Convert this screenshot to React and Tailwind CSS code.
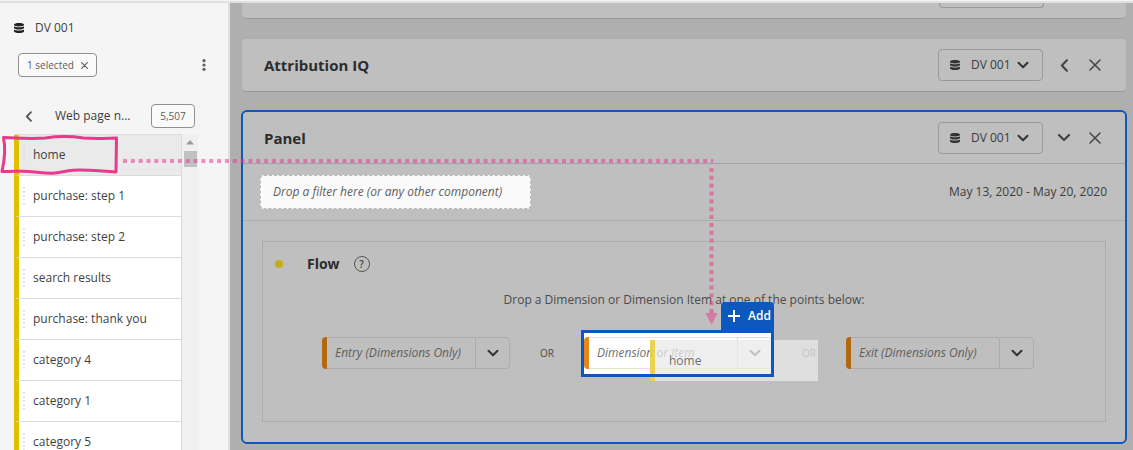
import React from "react";

const items = [
  "home",
  "purchase: step 1",
  "purchase: step 2",
  "search results",
  "purchase: thank you",
  "category 4",
  "category 1",
  "category 5",
];

function DatabaseIcon({ className }) {
  return (
    <svg viewBox="0 0 10 10" className={className} fill="currentColor" aria-hidden="true">
      <path d="M0 1.500C0 .6 2.200 0 5 0s5 .6 5 1.500v.6C10 2.900 7.800 3.400 5 3.400S0 2.900 0 2.100z" />
      <path d="M0 3.300c.9.700 2.800 1 5 1s4.100-.3 5-1v1.800c0 .9-2.200 1.500-5 1.500S0 6 0 5.100z" />
      <path d="M0 6.400c.9.800 2.800 1.100 5 1.100s4.100-.3 5-1.100v2.100C10 9.400 7.800 10 5 10S0 9.400 0 8.500z" />
    </svg>
  );
}

function ChevronDown({ className }) {
  return (
    <svg viewBox="0 0 12 8" className={className} fill="none" stroke="currentColor" strokeWidth="2" strokeLinecap="round" strokeLinejoin="round" aria-hidden="true">
      <path d="M1.500 1.800 6 6.200l4.500-4.400" />
    </svg>
  );
}

function ChevronLeft({ className }) {
  return (
    <svg viewBox="0 0 8 12" className={className} fill="none" stroke="currentColor" strokeWidth="2" strokeLinecap="round" strokeLinejoin="round" aria-hidden="true">
      <path d="M6.200 1.200 1.600 6l4.600 4.800" />
    </svg>
  );
}

function Cross({ className, width = 1.8 }) {
  return (
    <svg viewBox="0 0 12 12" className={className} fill="none" stroke="currentColor" strokeWidth={width} strokeLinecap="round" aria-hidden="true">
      <path d="m1 1 10 10M11 1 1 11" />
    </svg>
  );
}

function Grip({ className }) {
  return (
    <svg viewBox="0 0 3 18" className={className} fill="currentColor" aria-hidden="true">
      {[0, 4, 8, 12, 16].map((y) => (
        <rect key={y} x="0" y={y} width="2" height="1.500" />
      ))}
    </svg>
  );
}

function ViewSelect({ label }) {
  return (
    <label className="flex h-8 w-[105px] items-center rounded border border-[#999] pl-[11px] text-[#333]">
      <DatabaseIcon className="h-[10px] w-[10px] shrink-0" />
      <select aria-label={label} className="ml-[11px] w-11 appearance-none bg-transparent text-xs leading-5 text-[#3c3c3c] outline-none">
        <option>DV 001</option>
      </select>
      <ChevronDown className="ml-[2px] h-2 w-3 shrink-0" />
    </label>
  );
}

function PanelActions({ label, collapsed }) {
  return (
    <div className="flex items-center">
      <ViewSelect label={`${label} data view`} />
      <button type="button" aria-label={`Toggle ${label}`} className="ml-3 flex h-8 w-[18px] items-center justify-center text-[#444]">
        {collapsed ? <ChevronLeft className="h-[13px] w-[9px]" /> : <ChevronDown className="h-[9px] w-[14px]" />}
      </button>
      <button type="button" aria-label={`Close ${label}`} className="ml-3 flex h-8 w-5 items-center justify-center text-[#444]">
        <Cross className="h-3 w-3" width={1.5} />
      </button>
    </div>
  );
}

function DropField({ label, active }) {
  return (
    <div className="flex h-8 w-[188px]">
      <span className={active ? "w-[5px] shrink-0 rounded-l bg-[#e68619]" : "w-[5px] shrink-0 rounded-l bg-[#b36812]"} />
      <input
        type="text"
        aria-label={label}
        placeholder={label}
        className={
          active
            ? "w-0 flex-1 border-y border-[#e1e1e1] bg-white pl-2 text-xs italic leading-5 outline-none placeholder:text-[#707070]"
            : "w-0 flex-1 border-y border-[#acacac] bg-transparent pl-2 text-xs italic leading-5 outline-none placeholder:text-[#5e5e5e]"
        }
      />
      <button
        type="button"
        aria-label={`Choose ${label}`}
        className={
          active
            ? "flex w-[35px] shrink-0 items-center justify-center rounded-r border border-[#d8d8d8] bg-white text-[#4b4b4b]"
            : "flex w-[35px] shrink-0 items-center justify-center rounded-r border border-[#acacac] text-[#333]"
        }
      >
        <ChevronDown className="h-2 w-3" />
      </button>
    </div>
  );
}

function Sidebar() {
  return (
    <aside className="flex w-[230px] shrink-0 flex-col overflow-hidden border-r-2 border-[#e0e0e0] bg-[#f5f5f5]">
      <div className="flex items-center gap-[11px] pl-[14px] pt-[15px] text-[#222]">
        <DatabaseIcon className="h-[10px] w-[10px]" />
        <span className="text-xs leading-5 text-[#3f3f3f]">DV 001</span>
      </div>
      <div className="mt-[15px] flex items-center justify-between pl-[18px] pr-4">
        <button type="button" className="flex h-6 w-[79px] items-center justify-between rounded border border-[#909090] bg-[#fafafa] px-2 text-[10px] leading-4 text-[#5a5a5a]">
          1 selected
          <Cross className="h-[7px] w-[7px]" />
        </button>
        <button type="button" aria-label="More options" className="flex h-6 w-4 items-center justify-center text-[#5f5f5f]">
          <svg viewBox="0 0 4 12" className="h-3 w-1" fill="currentColor" aria-hidden="true">
            <circle cx="2" cy="1.700" r="1.600" />
            <circle cx="2" cy="6" r="1.600" />
            <circle cx="2" cy="10.300" r="1.600" />
          </svg>
        </button>
      </div>
      <div className="mt-[27px] flex items-center pl-[25px] pr-[33px] text-[#5a5a5a]">
        <button type="button" aria-label="Back" className="flex h-6 w-2 items-center">
          <ChevronLeft className="h-[11px] w-2" />
        </button>
        <span className="ml-[22px] flex-1 text-xs leading-5 text-[#3f3f3f]">Web page n...</span>
        <span className="flex h-6 w-11 items-center justify-center rounded border border-[#909090] bg-[#fafafa] text-[10px] leading-4 text-[#5a5a5a]">5,507</span>
      </div>
      <div className="mt-[6px] flex min-h-0 flex-1 pl-[14px]">
        <ul className="w-[168px] border-r border-t border-[#dcdcdc]">
          {items.map((name, i) => (
            <li key={name} className="h-[41px]">
              <button
                type="button"
                className={
                  i === 0
                    ? "flex h-full w-full items-center border-b border-l-[5px] border-b-[#dcdcdc] border-l-[#dfbf00] bg-[#eaeaea] pl-1 text-left text-xs leading-5 text-[#3f3f3f]"
                    : "flex h-full w-full items-center border-b border-l-[5px] border-b-[#dcdcdc] border-l-[#dfbf00] bg-white pl-1 text-left text-xs leading-5 text-[#3f3f3f]"
                }
              >
                <Grip className="h-[18px] w-[3px] text-[#dadada]" />
                <span className="ml-[7px]">{name}</span>
              </button>
            </li>
          ))}
        </ul>
        <div className="flex w-4 flex-col items-center bg-[#f0f0f0] pt-[6px]" aria-hidden="true">
          <svg viewBox="0 0 8 5" className="h-[5px] w-2" fill="#999">
            <path d="M4 0 8 4.500H0z" />
          </svg>
          <span className="mt-[6px] h-4 w-[13px] bg-[#c1c1c1]" />
        </div>
      </div>
    </aside>
  );
}

function DropTarget() {
  return (
    <div className="relative">
      <div className="absolute -bottom-2 -left-[3px] -right-[2px] -top-[7px] bg-white" />
      <div className="relative">
        <DropField label="Dimension or Item" active />
      </div>
      <div className="absolute left-[66px] top-[3px] flex h-[41px] w-[168px] items-center border-l-[5px] border-[#e8cc25]/80 bg-[#e9e9e9]/75 pl-[14px] text-xs leading-5 text-[#707070]">
        home
      </div>
      <div className="pointer-events-none absolute -bottom-2 -left-[3px] -right-[2px] -top-[7px] border-[3px] border-[#0d58bd]" />
      <button type="button" className="absolute -right-[2px] -top-[35px] flex h-7 w-[53px] items-center gap-2 rounded-t bg-[#0d58bd] pl-[7px] text-xs font-semibold leading-5 text-white">
        <svg viewBox="0 0 12 12" className="h-3 w-3 shrink-0" stroke="currentColor" strokeWidth="2" aria-hidden="true">
          <path d="M6 0v12M0 6h12" />
        </svg>
        <span>Add</span>
      </button>
    </div>
  );
}

function DragTrail() {
  return (
    <svg className="pointer-events-none absolute left-0 top-0 h-[450px] w-[800px]" viewBox="0 0 800 450" fill="none" aria-hidden="true">
      <path
        d="M3.500 137.500c14 .6 28 1.500 42 .5 13-2 28-1.500 38 0 12 1 22 .3 33 0l-.5 34c-14-.5-27-2.500-43-1.800-9 .5-12 3-21 3-12 0-18-2-29-2-7 0-13 .6-21 .2 2.500-11 4-22 1.500-33.900z"
        stroke="#e83a8c"
        strokeWidth="3"
        strokeLinejoin="round"
      />
      <path d="M123 161h590" stroke="#e83a8c" strokeOpacity="0.55" strokeWidth="4" strokeDasharray="4 3.840" />
      <path d="M711.500 168v148" stroke="#e83a8c" strokeOpacity="0.550" strokeWidth="4" strokeDasharray="4 3.840" />
      <path d="M705.500 313h12l-6 12z" fill="#d87aa6" />
    </svg>
  );
}

export default function App() {
  return (
    <div className="relative flex h-screen flex-col overflow-hidden bg-[#f5f5f5] font-['Open_Sans','Noto_Sans',sans-serif]">
      <div className="h-[3px] shrink-0 border-b-2 border-[#e0e0e0]" />
      <div className="flex min-h-0 flex-1">
        <Sidebar />
        <main className="min-w-0 flex-1 overflow-hidden bg-[#afafaf] pl-[11px] pr-[6px]">
          <section className="mx-px flex h-4 items-end justify-end rounded-b border-b border-[#999] bg-[#bfbfbf] pb-[10px] pr-[82px]">
            <span className="h-[5px] w-[105px] rounded-b border-x border-b border-[#999]" />
          </section>
          <section className="mx-px mt-5 flex h-[53px] items-center justify-between rounded border-b border-[#999] bg-[#bfbfbf] pl-[22px] pr-[21px]">
            <h2 className="text-[15px] font-bold leading-6 text-[#2c2c2c]">Attribution IQ</h2>
            <PanelActions label="Attribution IQ" collapsed />
          </section>
          <section className="mt-[18px] rounded-md border-2 border-[#0d58bd] bg-[#bfbfbf]">
            <header className="flex h-[52px] items-center justify-between border-b border-[#a2a2a2] pl-[21px] pr-5">
              <h2 className="text-[15px] font-bold leading-6 text-[#2c2c2c]">Panel</h2>
              <PanelActions label="Panel" />
            </header>
            <div className="flex h-[57px] items-center justify-between border-b border-[#acacac] pl-[17px] pr-[18px]">
              <div className="flex h-[34px] w-[271px] items-center whitespace-nowrap rounded border border-dashed border-[#b8b8b8] bg-[#fafafa] pl-3 text-xs italic leading-5 text-[#5e5e5e]">
                Drop a filter here (or any other component)
              </div>
              <span className="text-xs leading-5 text-[#3c3c3c]">May 13, 2020 - May 20, 2020</span>
            </div>
            <div className="mx-[19px] mb-5 mt-5 h-[181px] border border-[#acacac]">
              <div className="flex items-center pl-3 pt-[10px]">
                <span className="h-2 w-2 rounded-full bg-[#c8ab1a]" />
                <h3 className="ml-6 text-sm font-bold leading-6 text-[#2c2c2c]">Flow</h3>
                <button type="button" aria-label="Help" className="ml-[14px] flex h-4 w-4 items-center justify-center rounded-full border border-[#555] text-[10px] font-semibold leading-4 text-[#444]">
                  ?
                </button>
              </div>
              <p className="mt-3 text-center text-xs leading-6 text-[#4b4b4b]">Drop a Dimension or Dimension Item at one of the points below:</p>
              <div className="mt-[25px] flex items-center justify-center pr-3 text-[10px] leading-4 text-[#4b4b4b]">
                <DropField label="Entry (Dimensions Only)" />
                <span className="w-[74px] text-center">OR</span>
                <DropTarget />
                <span className="w-[74px] text-center">OR</span>
                <DropField label="Exit (Dimensions Only)" />
              </div>
            </div>
          </section>
        </main>
      </div>
      <DragTrail />
    </div>
  );
}
